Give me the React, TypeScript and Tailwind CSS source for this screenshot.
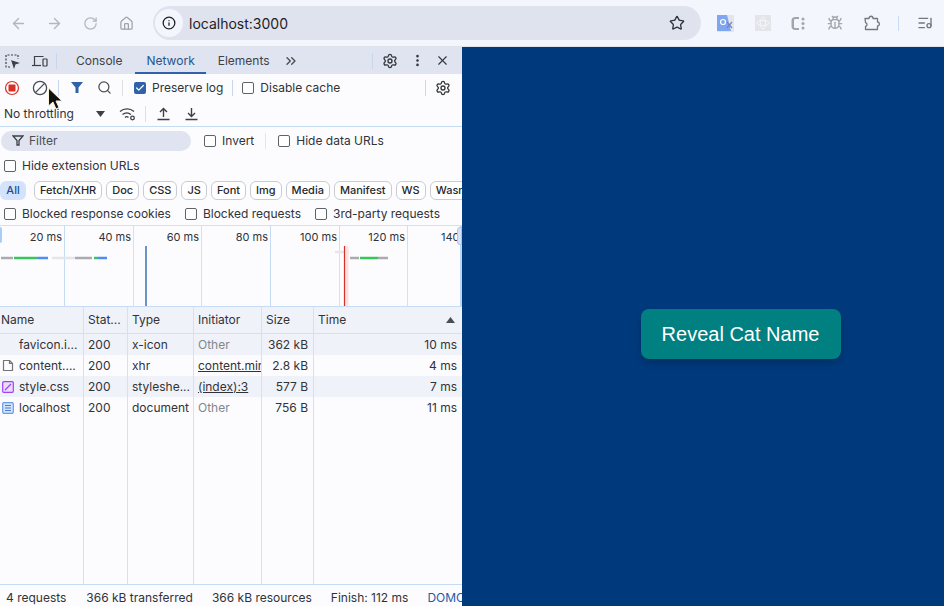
import React from 'react';
import {
  ArrowLeft, ArrowRight, RotateCw, House, Info, Star, Settings, EllipsisVertical, X,
  ChevronsRight, Search, Check, Bug, ListMusic,
} from 'lucide-react';

const COLS = 'grid grid-cols-[84px_44px_66px_68px_52px_1fr]';
const CHIPS = ['Fetch/XHR', 'Doc', 'CSS', 'JS', 'Font', 'Img', 'Media', 'Manifest', 'WS', 'Wasm'];

interface Req { name: string; status: string; type: string; initiator: string; link?: boolean; size: string; time: string; icon?: 'file' | 'css' | 'doc'; }

const REQUESTS: Req[] = [
  { name: 'favicon.i...', status: '200', type: 'x-icon', initiator: 'Other', size: '362 kB', time: '10 ms' },
  { name: 'content....', status: '200', type: 'xhr', initiator: 'content.min', link: true, size: '2.8 kB', time: '4 ms', icon: 'file' },
  { name: 'style.css', status: '200', type: 'styleshe...', initiator: '(index):3', link: true, size: '577 B', time: '7 ms', icon: 'css' },
  { name: 'localhost', status: '200', type: 'document', initiator: 'Other', size: '756 B', time: '11 ms', icon: 'doc' },
];

const TICKS = [
  { x: 64, label: '20 ms', blue: true },
  { x: 133, label: '40 ms', blue: false },
  { x: 201, label: '60 ms', blue: false },
  { x: 270, label: '80 ms', blue: true },
  { x: 339, label: '100 ms', blue: false },
  { x: 407, label: '120 ms', blue: false },
];

const Box = ({ label, checked }: { label: string; checked?: boolean }) => (
  <label className="flex items-center gap-[6px] whitespace-nowrap">
    {checked ? (
      <span className="flex h-3 w-3 items-center justify-center rounded-[2px] bg-[#2f62a8]">
        <Check size={10} strokeWidth={3} className="text-white" />
      </span>
    ) : (
      <span className="h-3 w-3 rounded-[2px] border border-[#5f6368] bg-white" />
    )}
    <span>{label}</span>
  </label>
);

const ReqIcon = ({ kind }: { kind?: Req['icon'] }) => {
  if (kind === 'file') {
    return (
      <svg width="12" height="13" viewBox="0 0 12 13" fill="none" stroke="#70757a" strokeWidth="1.2">
        <path d="M1.500 1.500h6l3 3v7h-9z" strokeLinejoin="round" />
        <path d="M7.500 1.500v3h3" />
      </svg>
    );
  }
  if (kind === 'css') {
    return (
      <svg width="12" height="12" viewBox="0 0 12 12" fill="none">
        <rect x="0.7" y="0.7" width="10.6" height="10.6" rx="1" fill="#ecdcfb" stroke="#a142f4" strokeWidth="1.2" />
        <path d="M3 9l6-6" stroke="#a142f4" strokeWidth="1.2" />
      </svg>
    );
  }
  if (kind === 'doc') {
    return (
      <svg width="12" height="12" viewBox="0 0 12 12" fill="none">
        <rect x="0.7" y="0.7" width="10.6" height="10.6" rx="1" fill="#d2e3fc" stroke="#6a9be8" strokeWidth="1.2" />
        <path d="M3 3.500h6M3 6h6M3 8.500h6" stroke="#4d80cf" strokeWidth="1" />
      </svg>
    );
  }
  return <span className="w-3" />;
};

const Overview = () => (
  <div className="relative h-[81px] shrink-0 overflow-hidden border-b border-[#c6dcf5] bg-[#fcfcff] text-[11px] text-[#303338]">
    {TICKS.map(t => (
      <React.Fragment key={t.x}>
        <span className={`absolute top-0 h-full w-px ${t.blue ? 'bg-[#c6dcf5]' : 'bg-[#dcdfe6]'}`} style={{ left: t.x }} />
        <span className="absolute top-[3px] whitespace-nowrap text-right" style={{ right: 462 - t.x + 2 }}>{t.label}</span>
      </React.Fragment>
    ))}
    <span className="absolute left-[441px] top-[3px]">140</span>
    <svg className="absolute left-0 top-0" width="462" height="80" fill="none">
      <g strokeWidth="2.500">
        <path d="M1 32h12" stroke="#a9abb0" />
        <path d="M14 32h24" stroke="#34c759" />
        <path d="M38 32h10" stroke="#4f8ef0" />
        <path d="M52 32h23" stroke="#e5e6ea" />
        <path d="M75 32h17" stroke="#a9abb0" />
        <path d="M94 32h4" stroke="#34c759" />
        <path d="M98 32h9" stroke="#4f8ef0" />
        <path d="M335 26h14" stroke="#e7e7ea" />
        <path d="M350 32h9" stroke="#a9abb0" />
        <path d="M360 32h18" stroke="#34c759" />
        <path d="M378 32h10" stroke="#a9abb0" />
      </g>
      <path d="M146 20v60" stroke="#0b4ea2" strokeWidth="1.200" />
      <path d="M346.500 20v60" stroke="#fbe3e1" strokeWidth="4" />
      <path d="M344.500 20v60" stroke="#d93025" strokeWidth="1.200" />
    </svg>
    <span className="absolute left-0 top-[1px] h-[16px] w-[2px] rounded-r-[2px] bg-[#a8cdf7]" />
    <span className="absolute right-0 top-0 h-full w-[2px] bg-[#b8d4f7]" />
    <span className="absolute right-0 top-[1px] h-[18px] w-[5px] rounded-l-[3px] border border-[#a8c7ef] bg-[#d3e3fd]" />
  </div>
);

export default function App() {
  return (
    <div className="relative flex h-[606px] w-[944px] flex-col overflow-hidden bg-[#003a7d] font-['Inter','Liberation_Sans',sans-serif] text-[12px] text-[#303338]">
      {/* browser toolbar */}
      <div className="flex h-[47px] shrink-0 items-center border-b border-[#dfe3ee] bg-[#f4f6fd]">
        <div className="flex w-[153px] items-center text-[#b3b6bd]">
          <span className="flex w-[36px] justify-center"><ArrowLeft size={17} /></span>
          <span className="flex w-[36px] justify-center"><ArrowRight size={17} /></span>
          <span className="flex w-[36px] justify-center"><RotateCw size={15} /></span>
          <span className="flex w-[36px] justify-center text-[#a0a3aa]"><House size={15} /></span>
        </div>
        <div className="flex h-[34px] w-[548px] items-center rounded-full bg-[#dfe3ee] pl-[2px] pr-[16px]">
          <span className="flex h-[28px] w-[28px] items-center justify-center rounded-full bg-[#f4f6fd] text-[#1f2125]">
            <Info size={14} strokeWidth={2.2} />
          </span>
          <span className="ml-[6px] flex-1 text-[14px] text-[#1f2125]">localhost:3000</span>
          <Star size={16} strokeWidth={2} className="text-[#2f333a]" />
        </div>
        <div className="ml-[16px] flex items-center">
          <svg width="17" height="17" viewBox="0 0 17 17">
            <rect width="17" height="17" fill="#e3e5ea" />
            <path d="M0 0h10l4 16H0z" fill="#7fa6ee" />
            <circle cx="6" cy="7" r="2.500" fill="none" stroke="#fff" strokeWidth="1.200" />
            <path d="M10 7l5 6M15 7l-5 6" stroke="#7b83c6" strokeWidth="1.200" />
          </svg>
          <svg className="ml-[21px]" width="16" height="16" viewBox="0 0 16 16" fill="none">
            <rect width="16" height="16" fill="#e3e5ea" />
            <ellipse cx="8" cy="8" rx="6" ry="2.500" stroke="#f5f6f8" />
            <ellipse cx="8" cy="8" rx="2.500" ry="6" stroke="#f5f6f8" />
          </svg>
          <svg className="ml-[19px]" width="16" height="17" viewBox="0 0 16 17" fill="#a3a5aa">
            <path d="M9 4H5.500C4.500 4 4 4.500 4 5.500v6c0 1 .5 1.500 1.500 1.500H9v2H5C3 15 1.500 13.500 1.500 11.500v-6C1.500 3.500 3 2 5 2h4z" />
            <circle cx="13" cy="4" r="1.500" /><circle cx="13" cy="8.500" r="1.500" /><circle cx="13" cy="13" r="1.500" />
          </svg>
          <Bug size={16} className="ml-[21px] text-[#a3a5aa]" />
          <svg className="ml-[21px]" width="16" height="16" viewBox="0 0 16 16" fill="none" stroke="#74777d" strokeWidth="1.300" strokeLinejoin="round">
            <path d="M1 3.500h4c0-3 4-3 4 0h4.500v3.500c2.500 0 2.500 4 0 4v3.500H1.500v-3c2-.5 2-3.500 0-4z" />
          </svg>
          <span className="ml-[18px] h-[15px] w-px bg-[#c6dcf5]" />
          <ListMusic size={16} className="ml-[18px] text-[#74777d]" />
        </div>
      </div>

      <div className="flex min-h-0 flex-1">
        {/* devtools */}
        <div className="flex w-[462px] shrink-0 flex-col bg-[#fcfcff]">
          {/* tabs */}
          <div className="flex h-[27px] shrink-0 items-center bg-[#dfe4f0] pl-[4px] text-[#3f4248]">
            <svg width="16" height="16" viewBox="0 0 16 16" fill="none" stroke="#3c3f45" strokeWidth="1.200">
              <path d="M6 14H2V2h12v4" strokeDasharray="2 1.500" />
              <path d="M8 8l6 2-3 1-1 3z" fill="#3c3f45" />
            </svg>
            <svg className="ml-[12px]" width="16" height="14" viewBox="0 0 16 14" fill="none" stroke="#3c3f45" strokeWidth="1.200">
              <path d="M2.500 11V2.500h9" />
              <path d="M0 11.500h9" />
              <rect x="11" y="5" width="4" height="7" rx="0.500" />
            </svg>
            <span className="ml-[8px] h-[16px] w-px bg-[#c9d7ea]" />
            <span className="ml-[19px]">Console</span>
            <span className="relative ml-[13px] flex h-full items-center px-[11px] text-[#24558f]">
              Network
              <span className="absolute bottom-0 left-0 h-[2px] w-full bg-[#2f62a8]" />
            </span>
            <span className="ml-[12px]">Elements</span>
            <ChevronsRight size={16} className="ml-[13px] text-[#4a4d52]" />
            <span className="ml-[73px] h-[16px] w-px bg-[#c9d7ea]" />
            <Settings size={16} strokeWidth={2} className="ml-[9px] text-[#33363b]" />
            <EllipsisVertical size={15} strokeWidth={2.2} className="ml-[12px] text-[#33363b]" />
            <X size={15} strokeWidth={1.8} className="ml-[10px] text-[#33363b]" />
          </div>

          {/* recording toolbar */}
          <div className="flex h-[27px] shrink-0 items-center pl-[4px]">
            <svg width="16" height="16" viewBox="0 0 16 16">
              <circle cx="8" cy="8" r="6.500" fill="none" stroke="#d93025" strokeWidth="1.200" />
              <rect x="4.500" y="4.500" width="7" height="7" rx="1" fill="#d93025" />
            </svg>
            <svg className="ml-[12px]" width="16" height="16" viewBox="0 0 16 16" fill="none" stroke="#4a4d52" strokeWidth="1.300">
              <circle cx="8" cy="8" r="6.600" />
              <path d="M3.400 12.600l9.200-9.200" />
            </svg>
            <span className="ml-[10px] h-[16px] w-px bg-[#c9d7ea]" />
            <svg className="ml-[11px]" width="14" height="13" viewBox="0 0 14 13"><path d="M1 1h12L8.500 6.500V12h-3V6.500z" fill="#2f62a8" /></svg>
            <Search size={15} className="ml-[13px] text-[#4a4d52]" />
            <span className="ml-[10px] h-[16px] w-px bg-[#dcdfe6]" />
            <span className="ml-[11px]"><Box label="Preserve log" checked /></span>
            <span className="mx-[9px] h-[16px] w-px bg-[#c9d7ea]" />
            <Box label="Disable cache" />
            <span className="ml-[85px] h-[16px] w-px bg-[#c9d7ea]" />
            <Settings size={16} strokeWidth={2} className="ml-[9px] text-[#33363b]" />
          </div>

          {/* throttling */}
          <div className="flex h-[26px] shrink-0 items-center border-b border-[#c6dcf5] pl-[4px]">
            <span className="w-[92px]">No throttling</span>
            <svg width="9" height="6" viewBox="0 0 9 6"><path d="M0 0h9L4.500 6z" fill="#3c3f45" /></svg>
            <svg className="ml-[14px]" width="17" height="14" viewBox="0 0 17 14" fill="none" stroke="#3c3f45" strokeWidth="1.300">
              <path d="M1 4.500c4-3.500 10-3.500 14 0M3.500 7.500c2.500-2 6-2 8.500 0M6 10.500c1-1 2.500-1 3.500 0" />
              <circle cx="13.500" cy="11" r="1.800" />
            </svg>
            <span className="ml-[9px] h-[16px] w-px bg-[#dcdfe6]" />
            <svg className="ml-[11px]" width="13" height="14" viewBox="0 0 13 14" fill="none" stroke="#3c3f45" strokeWidth="1.400"><path d="M6.500 10V1.500M3 5l3.500-3.500L10 5M0.500 12.500h12" /></svg>
            <svg className="ml-[15px]" width="13" height="14" viewBox="0 0 13 14" fill="none" stroke="#3c3f45" strokeWidth="1.400"><path d="M6.500 1v8.500M3 6l3.500 3.500L10 6M0.500 12.500h12" /></svg>
          </div>

          {/* filter */}
          <div className="flex h-[27px] shrink-0 items-center pl-[1px]">
            <div className="flex h-[20px] w-[190px] items-center rounded-full bg-[#dfe4f0] pl-[11px] text-[#4a4d52]">
              <svg width="12" height="11" viewBox="0 0 12 11" fill="none" stroke="#3c3f45" strokeWidth="1.300"><path d="M1 1h10L7 5.500V10H5V5.500z" /></svg>
              <span className="ml-[5px]">Filter</span>
            </div>
            <span className="ml-[13px]"><Box label="Invert" /></span>
            <span className="ml-[11px] mr-[12px] h-[16px] w-px bg-[#e3e5ea]" />
            <Box label="Hide data URLs" />
          </div>
          <div className="flex h-[24px] shrink-0 items-center pl-[4px]"><Box label="Hide extension URLs" /></div>

          {/* type chips */}
          <div className="flex h-[24px] shrink-0 items-center gap-[4px] overflow-hidden text-[11px] font-medium text-[#26282c]">
            <span className="mr-[4px] flex h-[19px] w-[26px] shrink-0 items-center justify-center rounded-[6px] bg-[#d3e3fd] text-[#1f4c8a]">All</span>
            {CHIPS.map(c => (
              <span key={c} className="flex h-[19px] shrink-0 items-center rounded-[6px] border border-[#c9ccd2] bg-white px-[5px]">{c}</span>
            ))}
          </div>

          <div className="flex h-[24px] shrink-0 items-center border-b border-[#dcdfe6] pl-[4px]">
            <Box label="Blocked response cookies" />
            <span className="ml-[14px]"><Box label="Blocked requests" /></span>
            <span className="ml-[14px]"><Box label="3rd-party requests" /></span>
          </div>

          <Overview />

          {/* request table */}
          <div className={`${COLS} h-[27px] shrink-0 items-stretch border-b border-[#dcdfe6] bg-[#f0f2f9]`}>
            {['Name', 'Stat...', 'Type', 'Initiator', 'Size'].map(h => (
              <span key={h} className="flex items-center border-r border-[#dcdfe6] pl-[1px] [&:not(:first-child)]:pl-[4px]">{h}</span>
            ))}
            <span className="flex items-center justify-between pl-[4px] pr-[7px]">
              Time
              <svg width="9" height="6" viewBox="0 0 9 6"><path d="M0 6h9L4.500 0z" fill="#4a4d52" /></svg>
            </span>
          </div>
          {REQUESTS.map((r, i) => (
            <div key={r.name} className={`${COLS} h-[21px] shrink-0 ${i % 2 === 0 ? 'bg-[#f0f2f9]' : 'bg-[#fcfcff]'}`}>
              <span className="flex items-center gap-[4px] overflow-hidden whitespace-nowrap border-r border-[#dcdfe6] pl-[2px] pr-[1px] [&>svg]:shrink-0">
                <ReqIcon kind={r.icon} />
                <span className="ml-[1px]">{r.name}</span>
              </span>
              <span className="flex items-center border-r border-[#dcdfe6] pl-[4px]">{r.status}</span>
              <span className="flex items-center whitespace-nowrap border-r border-[#dcdfe6] pl-[4px]">{r.type}</span>
              <span className={`flex items-center overflow-hidden whitespace-nowrap border-r border-[#dcdfe6] pl-[4px] ${r.link ? 'underline' : 'text-[#80868b]'}`}>{r.initiator}</span>
              <span className="flex items-center justify-end border-r border-[#dcdfe6] pr-[5px]">{r.size}</span>
              <span className="flex items-center justify-end pr-[5px]">{r.time}</span>
            </div>
          ))}
          <div className={`${COLS} min-h-0 flex-1`}>
            {[0, 1, 2, 3, 4].map(i => <span key={i} className="border-r border-[#dcdfe6]" />)}
          </div>

          {/* status bar */}
          <div className="flex h-[22px] shrink-0 items-end overflow-hidden whitespace-nowrap border-t border-[#c6dcf5] pl-[6px]">
            <span className="mb-[-1px]">4 requests</span>
            <span className="mx-[10px] h-[16px] w-px bg-[#dcdfe6]" />
            <span className="mb-[-1px]">366 kB transferred</span>
            <span className="mx-[9.5px] h-[16px] w-px bg-[#dcdfe6]" />
            <span className="mb-[-1px]">366 kB resources</span>
            <span className="mx-[9.5px] h-[16px] w-px bg-[#c6dcf5]" />
            <span className="mb-[-1px]">Finish: 112 ms</span>
            <span className="mx-[9.5px] h-[16px] w-px bg-[#c6dcf5]" />
            <span className="mb-[-1px] text-[#1f5aa8]">DOMContentLoaded</span>
          </div>
        </div>

        {/* page */}
        <div className="flex flex-1 items-center justify-center bg-[#003a7d] pl-[75px] pt-[14px]">
          <button className="h-[50px] w-[200px] rounded-[8px] bg-[#008080] font-['Liberation_Sans',sans-serif] text-[20px] text-white shadow-[0_4px_8px_rgba(0,0,0,0.2)]">
            Reveal Cat Name
          </button>
        </div>
      </div>

      {/* mouse pointer */}
      <svg className="absolute left-[47px] top-[87px]" width="16" height="24" viewBox="0 0 16 24">
        <path d="M1.500 1v18l4.500-4 3 7 3-1.500-3-6.500h6z" fill="#111" stroke="#f5f3d8" strokeWidth="1" />
      </svg>
    </div>
  );
}
